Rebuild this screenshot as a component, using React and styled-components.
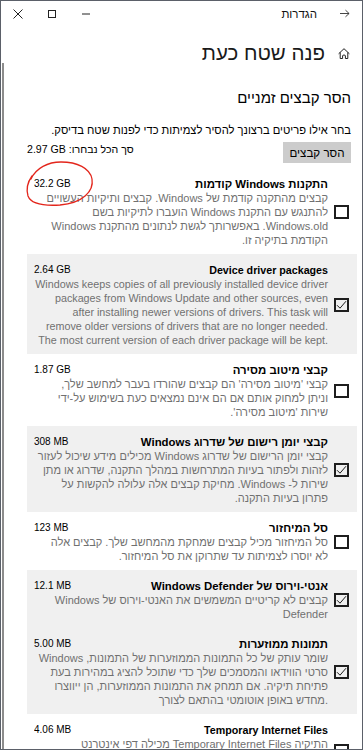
import React from 'react';
import styled, { createGlobalStyle } from 'styled-components';

const Global = createGlobalStyle`
  html, body { margin: 0; padding: 0; background: #fff; }
  body { font-family: "Liberation Sans", "DejaVu Sans", sans-serif; }
`;

const Window = styled.div`
  position: relative;
  width: 363px;
  height: 750px;
  box-sizing: border-box;
  border: 1px solid #5b6069;
  background: #fff;
  overflow: hidden;
  display: flex;
  flex-direction: column;
  direction: rtl;
  color: #000;
`;

const ScrollIndicator = styled.div`
  position: absolute;
  left: 1px;
  top: 62px;
  bottom: 0;
  width: 2px;
  background: #8c8c8c;
`;

const TitleBar = styled.div`
  height: 25px;
  flex: none;
  display: flex;
  align-items: center;
  padding-right: 12px;
`;

const BackButton = styled.div`
  width: 10px;
  height: 10px;
  display: flex;
  align-items: center;
  justify-content: center;
`;

const TitleText = styled.div`
  margin-right: 23px;
  font-size: 11.5px;
  color: #111;
`;

const Controls = styled.div`
  margin-right: auto;
  display: flex;
  height: 100%;
`;

const Control = styled.div`
  width: 34px;
  height: 100%;
  display: flex;
  align-items: center;
  justify-content: center;
`;

const HeadingRow = styled.div`
  margin-top: 12px;
  display: flex;
  align-items: center;
  gap: 13px;
  padding-right: 12px;
  height: 30px;
`;

const Heading = styled.h1`
  margin: 0;
  font-size: 20.5px;
  font-weight: normal;
  line-height: 30px;
  color: #1a1a1a;
`;

const Body = styled.div`
  padding: 0 5px 0 26px;
`;

const Intro = styled.div`
  padding-right: 6px;
`;

const SectionTitle = styled.h2`
  margin: 18px 0 0;
  font-size: 15px;
  font-weight: normal;
  line-height: 24px;
`;

const Instruction = styled.p`
  margin: 12px 0 0;
  font-size: 11.2px;
  line-height: 16px;
`;

const ActionRow = styled.div`
  margin-top: 4px;
  display: flex;
  justify-content: space-between;
  align-items: flex-start;
`;

const CleanButton = styled.button`
  font-family: inherit;
  height: 21px;
  width: 68px;
  padding: 0;
  border: none;
  background: #cccccc;
  font-size: 11.6px;
  color: #000;
`;

const Total = styled.div`
  font-size: 10.6px;
  line-height: 16px;
  margin-top: -1px;
`;

const List = styled.div`
  margin-top: 5px;
  display: flex;
  flex-direction: column;
`;

const Item = styled.div`
  position: relative;
  display: flex;
  align-items: center;
  gap: 6px;
  padding: 9px 8px 7px 7px;
  background: ${p => (p.$checked ? '#f0f0f0' : 'transparent')};
`;

const Box = styled.div`
  flex: none;
  width: 15px;
  height: 14px;
  box-sizing: border-box;
  border: 2px solid #1e1e1e;
  display: flex;
  align-items: center;
  justify-content: center;
`;

const Content = styled.div`
  flex: 1;
  min-width: 0;
`;

const ItemHead = styled.div`
  display: flex;
  justify-content: space-between;
  align-items: center;
  height: 14px;
  line-height: 14px;
  overflow: hidden;
`;

const ItemTitle = styled.div`
  font-size: ${p => (p.$latin ? '10.7px' : '11.4px')};
  font-weight: bold;
`;

const Size = styled.div`
  font-size: 10px;
  direction: ltr;
`;

const Desc = styled.p`
  margin: 0;
  font-size: ${p => (p.$latin ? '10.75px' : '11px')};
  line-height: 14px;
  color: #707070;
  text-align: right;
  unicode-bidi: plaintext;
  white-space: pre-line;
`;

const Annotation = styled.svg`
  position: absolute;
  left: -7px;
  top: -10px;
  pointer-events: none;
`;

const items = [
  {
    title: 'התקנות Windows קודמות',
    size: '32.2 GB',
    checked: false,
    annotated: true,
    desc: 'קבצים מהתקנה קודמת של Windows. קבצים ותיקיות העשויים להתנגש עם התקנת Windows הועברו לתיקיות בשם Windows.old. באפשרותך לגשת לנתונים מהתקנת Windows הקודמת בתיקיה זו.',
  },
  {
    title: 'Device driver packages',
    size: '2.64 GB',
    checked: true,
    latin: true,
    desc: 'Windows keeps copies of all previously installed device driver packages from Windows Update and other sources, even after installing newer versions of drivers. This task will remove older versions of drivers that are no longer needed. The most current version of each driver package will be kept.',
  },
  {
    title: 'קבצי מיטוב מסירה',
    size: '1.87 GB',
    checked: false,
    desc: "קבצי 'מיטוב מסירה' הם קבצים שהורדו בעבר למחשב שלך,\nוניתן למחוק אותם אם הם אינם נמצאים כעת בשימוש על-ידי שירות 'מיטוב מסירה'.",
  },
  {
    title: 'קבצי יומן רישום של שדרוג Windows',
    size: '308 MB',
    checked: true,
    desc: 'קבצי יומן הרישום של שדרוג Windows מכילים מידע שיכול לעזור לזהות ולפתור בעיות המתרחשות במהלך התקנה, שדרוג או מתן שירות ל- Windows. מחיקת קבצים אלה עלולה להקשות על פתרון בעיות התקנה.',
  },
  {
    title: 'סל המיחזור',
    size: '123 MB',
    checked: false,
    desc: 'סל המיחזור מכיל קבצים שמחקת מהמחשב שלך. קבצים אלה\nלא יוסרו לצמיתות עד שתרוקן את סל המיחזור.',
  },
  {
    title: 'אנטי-וירוס של Windows Defender',
    size: '12.1 MB',
    checked: true,
    desc: 'קבצים לא קריטיים המשמשים את האנטי-וירוס של Windows Defender',
  },
  {
    title: 'תמונות ממוזערות',
    size: '5.00 MB',
    checked: true,
    desc: 'Windows שומר עותק של כל התמונות הממוזערות של התמונות, סרטי הווידאו והמסמכים שלך כדי שתוכל להציג במהירות בעת פתיחת תיקיה. אם תמחק את התמונות הממוזערות, הן ייווצרו מחדש באופן אוטומטי בהתאם לצורך.',
  },
  {
    title: 'Temporary Internet Files',
    size: '4.06 MB',
    checked: false,
    latinTitle: true,
    desc: 'התיקיה Temporary Internet Files מכילה דפי אינטרנט המאוחסנים בדיסק הקשיח לצורך הצגה מהירה. ההגדרות המותאמות אישית שלך עבור דפי אינטרנט יישארו ללא שינוי.',
  },
];

const Check = () => (
  <svg width="11" height="10" viewBox="0 0 11 10">
    <path d="M1 5.2 L4 8.2 L10 1.2" fill="none" stroke="#1e1e1e" strokeWidth="1" />
  </svg>
);

const RedCircle = () => (
  <Annotation width="80" height="54" viewBox="0 0 80 54">
    <path
      d="M11 21 C16 10 28 4 41 4 C57 4 70 10 72 21 C74 33 63 45 40 47 C24 48 11 46 8 38 C6 31 7 25 12 18"
      fill="none"
      stroke="#e3261c"
      strokeWidth="1.3"
      strokeLinecap="round"
    />
  </Annotation>
);

export default function App() {
  return (
    <>
      <Global />
      <Window>
        <ScrollIndicator />
        <TitleBar>
          <BackButton>
            <svg width="11" height="9" viewBox="0 0 11 9">
              <path d="M0 4.5 H10 M6 0.8 L10 4.5 L6 8.2" fill="none" stroke="#333" strokeWidth="1" />
            </svg>
          </BackButton>
          <TitleText>הגדרות</TitleText>
          <Controls>
            <Control>
              <svg width="8" height="2" viewBox="0 0 8 2">
                <path d="M0 1 H8" stroke="#222" strokeWidth="1" />
              </svg>
            </Control>
            <Control>
              <svg width="8" height="8" viewBox="0 0 8 8">
                <rect x="0.5" y="0.5" width="7" height="7" fill="none" stroke="#222" strokeWidth="1" />
              </svg>
            </Control>
            <Control>
              <svg width="10" height="10" viewBox="0 0 10 10">
                <path d="M0.5 0.5 L9.5 9.5 M9.5 0.5 L0.5 9.5" stroke="#222" strokeWidth="1" />
              </svg>
            </Control>
          </Controls>
        </TitleBar>

        <HeadingRow>
          <svg width="12" height="11" viewBox="0 0 12 11">
            <path
              d="M0.6 5.8 L6 0.7 L11.4 5.8 M2.2 4.4 V10.5 H4.6 V7.6 Q6 6.2 7.4 7.6 V10.5 H9.8 V4.4"
              fill="none"
              stroke="#222"
              strokeWidth="1"
            />
          </svg>
          <Heading>פנה שטח כעת</Heading>
        </HeadingRow>

        <Body>
          <Intro>
            <SectionTitle>הסר קבצים זמניים</SectionTitle>
            <Instruction>בחר אילו פריטים ברצונך להסיר לצמיתות כדי לפנות שטח בדיסק.</Instruction>
            <ActionRow>
              <CleanButton>הסר קבצים</CleanButton>
              <Total>
                סך הכל נבחרו: <bdi dir="ltr">2.97 GB</bdi>
              </Total>
            </ActionRow>
          </Intro>

          <List>
            {items.map(it => (
              <Item key={it.title} $checked={it.checked}>
                <Box>{it.checked && <Check />}</Box>
                <Content>
                  <ItemHead>
                    <ItemTitle $latin={it.latin || it.latinTitle}>{it.title}</ItemTitle>
                    <Size>{it.size}</Size>
                  </ItemHead>
                  <Desc $latin={it.latin}>{it.desc}</Desc>
                </Content>
                {it.annotated && <RedCircle />}
              </Item>
            ))}
          </List>
        </Body>
      </Window>
    </>
  );
}
